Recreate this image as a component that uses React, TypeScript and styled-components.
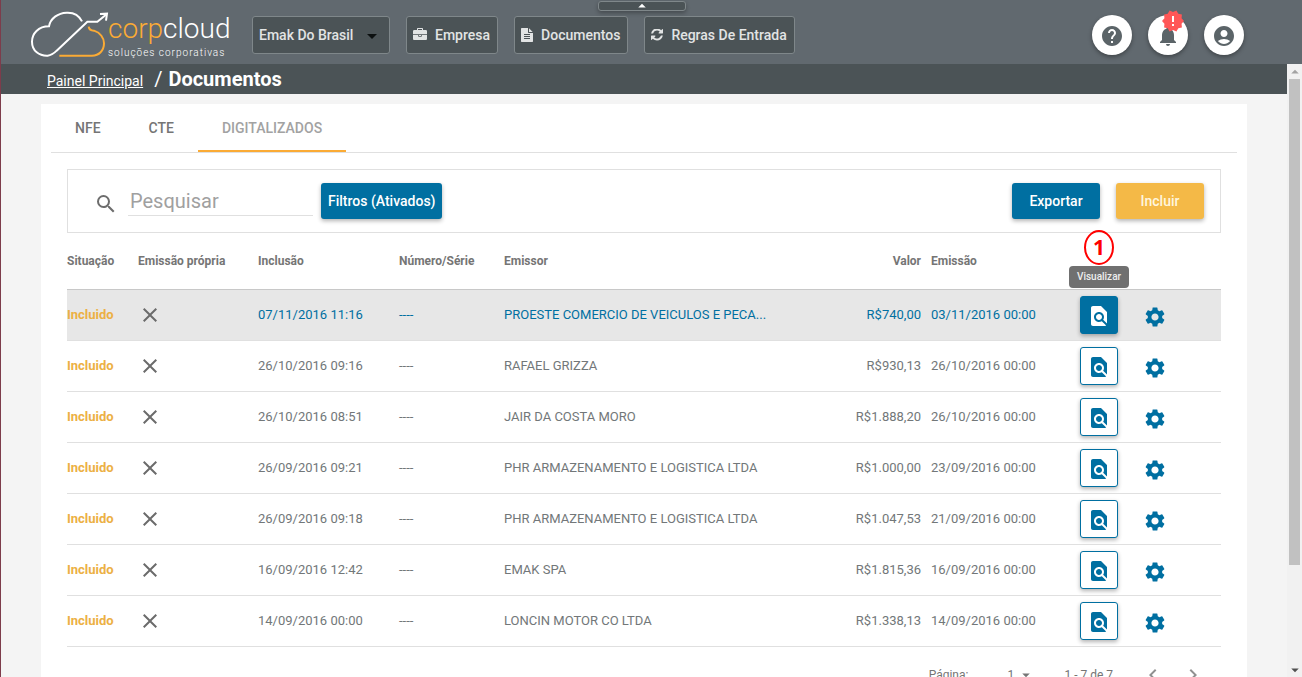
import React from "react";
import styled, { createGlobalStyle, css } from "styled-components";
import {
  MdAccountCircle,
  MdArrowDropDown,
  MdArrowDropUp,
  MdChevronLeft,
  MdChevronRight,
  MdClose,
  MdFindInPage,
  MdHelp,
  MdNewReleases,
  MdNotifications,
  MdSearch,
  MdSettings,
} from "react-icons/md";

const color = {
  header: "#61696f",
  bar: "#4b5356",
  barBorder: "#7f878a",
  page: "#f4f4f4",
  blue: "#006fa1",
  amber: "#f4b947",
  orange: "#fbab35",
  text: "#727779",
  line: "#e0e0e0",
};

const GlobalStyle = createGlobalStyle`
  *, *::before, *::after { box-sizing: border-box; }
  body {
    margin: 0;
    font-family: Roboto, "Liberation Sans", sans-serif;
    background: ${color.page};
  }
  button, input, select { font-family: inherit; }
  svg { display: block; flex: none; }
`;

const Shell = styled.div`
  display: flex;
  flex-direction: column;
  height: 100vh;
  border-left: 1px solid #7d3c4b;
  overflow: hidden;
`;

const Header = styled.header`
  position: relative;
  flex: none;
  display: flex;
  align-items: center;
  height: 64px;
  padding: 6px 58px 0 29px;
  background: ${color.header};
`;

const PullTab = styled.button`
  position: absolute;
  top: 1px;
  left: calc(50% - 54px);
  display: flex;
  align-items: center;
  justify-content: center;
  width: 88px;
  height: 10px;
  padding: 0;
  overflow: hidden;
  border: 1px solid ${color.barBorder};
  border-radius: 3px;
  background: ${color.bar};
  color: #fff;
  box-shadow: 0 2px 4px rgba(0, 0, 0, 0.3);
`;

const Brand = styled.a`
  display: flex;
  flex: none;
  width: 206px;
  margin-right: 16px;
  color: #fff;
  text-decoration: none;
`;

const BrandText = styled.span`
  display: flex;
  flex-direction: column;
  margin-left: -2px;
  padding-top: 3px;
`;

const BrandName = styled.span`
  font-size: 28px;
  line-height: 32px;
  font-weight: 300;
  white-space: nowrap;

  em {
    color: ${color.orange};
    font-style: normal;
  }
`;

const BrandTag = styled.span`
  padding-top: 2px;
  font-size: 10px;
  line-height: 12px;
  font-weight: 300;
  letter-spacing: 1px;
  white-space: nowrap;
`;

const Nav = styled.nav`
  display: flex;
  gap: 16px;
`;

const navControl = css`
  height: 38px;
  border: 1px solid ${color.barBorder};
  border-radius: 3px;
  background: ${color.bar};
  color: #e2e4e4;
  font-size: 14px;
  font-weight: 500;
  white-space: nowrap;
`;

const NavButton = styled.button`
  ${navControl}
  display: flex;
  align-items: center;
  gap: 8px;
  padding: 0 7px 0 6px;
`;

const CompanyField = styled.label`
  display: flex;
  position: relative;

  svg {
    position: absolute;
    top: 8px;
    right: 6px;
    color: #0c1010;
    pointer-events: none;
  }
`;

const CompanySelect = styled.select`
  ${navControl}
  appearance: none;
  width: 138px;
  padding: 0 30px 0 6px;
`;

const UserActions = styled.div`
  display: flex;
  gap: 16px;
  margin-left: auto;
`;

const RoundButton = styled.button`
  position: relative;
  display: flex;
  align-items: center;
  justify-content: center;
  width: 40px;
  height: 40px;
  padding: 2px 0 0;
  border: 0;
  border-radius: 50%;
  background: #fff;
  color: #5b6468;
  box-shadow: 0 2px 4px rgba(0, 0, 0, 0.35);
`;

const Alert = styled.span`
  position: absolute;
  top: -6px;
  right: 3px;
  color: #ff5757;
  background: linear-gradient(#fff, #fff) center / 4px 12px no-repeat;
`;

const Body = styled.div`
  flex: 1;
  display: flex;
  min-height: 0;
`;

const Content = styled.main`
  flex: 1;
  min-width: 0;
  overflow-y: auto;
  scrollbar-width: none;
`;

const ScrollRail = styled.div`
  flex: none;
  display: flex;
  flex-direction: column;
  width: 15px;
  background: #f1f1f1;
`;

const ScrollArrow = styled.span<{ $end?: boolean }>`
  display: flex;
  align-items: center;
  justify-content: center;
  height: 15px;
  color: ${(p) => (p.$end ? "#505050" : "#a3a3a3")};
`;

const ScrollThumb = styled.span`
  flex: 5;
  margin: 0 2px;
  background: #c1c1c1;
`;

const ScrollRest = styled.span`
  flex: 1;
`;

const Crumbs = styled.div`
  display: flex;
  align-items: center;
  height: 30px;
  padding: 0 46px;
  background: ${color.bar};
  color: #fff;
`;

const CrumbLink = styled.a`
  margin-right: 11px;
  padding-top: 4px;
  color: #fff;
  font-size: 14px;
  line-height: 18px;
`;

const CrumbTitle = styled.h1`
  margin: 0;
  font-size: 20px;
  line-height: 30px;
  font-weight: 700;

  span {
    margin-right: 6px;
    font-weight: 400;
  }
`;

const Panel = styled.section`
  margin: 10px 40px 16px;
  padding: 0 10px 16px;
  background: #fff;
`;

const Tabs = styled.div`
  display: flex;
  border-bottom: 1px solid ${color.line};
`;

const Tab = styled.button<{ $active?: boolean }>`
  height: 48px;
  padding: 2px 24px 0;
  border: 0;
  border-bottom: 2px solid ${(p) => (p.$active ? color.orange : "transparent")};
  background: none;
  color: ${(p) => (p.$active ? "#a2a2a2" : "#757575")};
  font-size: 14px;
  font-weight: 500;
`;

const Inner = styled.div`
  padding: 16px 16px 0;
`;

const Toolbar = styled.div`
  display: flex;
  align-items: center;
  height: 64px;
  padding: 0 16px 0 26px;
  border: 1px solid ${color.line};
`;

const SearchField = styled.label`
  display: flex;
  align-items: center;
  gap: 10px;
  margin-right: 8px;
  color: #6d6d6d;

  svg {
    margin-top: 6px;
  }
`;

const SearchInput = styled.input`
  width: 185px;
  height: 30px;
  padding: 0 2px;
  border: 0;
  border-bottom: 1px solid ${color.line};
  background: none;
  color: #555;
  font-size: 20px;

  &::placeholder {
    color: #a0a0a0;
  }
`;

const Raised = styled.button<{ $tone?: "amber" }>`
  min-width: 88px;
  height: 36px;
  padding: 0 7px;
  border: 0;
  border-radius: 3px;
  background: ${(p) => (p.$tone === "amber" ? color.amber : color.blue)};
  color: ${(p) => (p.$tone === "amber" ? "#fff6df" : "#fff")};
  font-size: 14px;
  font-weight: 500;
  white-space: nowrap;
  box-shadow: 0 2px 4px rgba(0, 0, 0, 0.3);
`;

const ToolbarEnd = styled.div`
  display: flex;
  gap: 16px;
  margin-left: auto;
`;

const Table = styled.table`
  width: 100%;
  table-layout: fixed;
  border-collapse: separate;
  border-spacing: 0;
`;

const Th = styled.th<{ $right?: boolean }>`
  height: 57px;
  padding: ${(p) => (p.$right ? "0 10px 0 0" : "0")};
  border-bottom: 1px solid #c8c8c8;
  color: #757575;
  font-size: 12px;
  font-weight: 700;
  text-align: ${(p) => (p.$right ? "right" : "left")};
  white-space: nowrap;
`;

const Td = styled.td`
  height: 51px;
  padding: 0;
  border-bottom: 1px solid ${color.line};
`;

const TextTd = styled(Td)<{ $right?: boolean }>`
  padding: ${(p) => (p.$right ? "0 10px 2px 0" : "0 0 2px")};
  font-size: 13px;
  text-align: ${(p) => (p.$right ? "right" : "left")};
  white-space: nowrap;
`;

const Row = styled.tr<{ $hover: boolean }>`
  color: ${(p) => (p.$hover ? color.blue : color.text)};
  background: ${(p) => (p.$hover ? "#e7e7e7" : "transparent")};
`;

const Status = styled.strong`
  color: #ecb044;
  font-weight: 700;
`;

const NotOwn = styled.span`
  display: block;
  color: #6b6b6b;
`;

const ViewCell = styled.div`
  position: relative;
  width: 38px;
`;

const ViewButton = styled.button<{ $hover: boolean }>`
  display: flex;
  align-items: center;
  justify-content: center;
  width: 38px;
  height: 38px;
  padding: 2px 0 0;
  border: 1px solid ${color.blue};
  border-radius: 3px;
  background: ${(p) => (p.$hover ? color.blue : "#fff")};
  color: ${(p) => (p.$hover ? "#fff" : color.blue)};
  box-shadow: 0 2px 4px rgba(0, 0, 0, 0.3);
`;

const Tooltip = styled.span`
  position: absolute;
  bottom: 46px;
  left: 50%;
  width: 60px;
  transform: translateX(-50%);
  border-radius: 4px;
  background: #707070;
  color: #eee;
  font-size: 10px;
  line-height: 22px;
  font-weight: 500;
  text-align: center;
`;

const Marker = styled.span`
  position: absolute;
  bottom: 69px;
  left: 50%;
  width: 30px;
  height: 35px;
  transform: translateX(-50%);
  border: 2px solid #ff0000;
  border-radius: 50%;
  color: #ff0000;
  font-family: "Open Sans", sans-serif;
  font-size: 21px;
  line-height: 31px;
  font-weight: 700;
  text-align: center;
`;

const GearButton = styled.button`
  display: flex;
  padding: 3px 0 0;
  margin-left: -2px;
  border: 0;
  background: none;
  color: ${color.blue};
`;

const Pager = styled.div`
  display: flex;
  align-items: center;
  justify-content: flex-end;
  height: 56px;
  padding-right: 8px;
  color: #757575;
  font-size: 12px;
`;

const PageField = styled.label`
  display: flex;
  align-items: center;
  position: relative;
  gap: 39px;
  margin-right: 29px;

  svg {
    position: absolute;
    right: 0;
  }
`;

const PageSelect = styled.select`
  appearance: none;
  width: 28px;
  padding: 0;
  border: 0;
  background: none;
  color: inherit;
  font-size: 12px;
`;

const PageRange = styled.span`
  margin-right: 20px;
`;

const PageButton = styled.button`
  display: flex;
  align-items: center;
  justify-content: center;
  width: 40px;
  height: 40px;
  padding: 0;
  border: 0;
  background: none;
  color: #909090;
`;

const Briefcase = () => (
  <svg width="14" height="14" viewBox="0 0 1792 1792" fill="currentColor" aria-hidden>
    <path d="M640 256h512v-128h-512v128zm1152 640v480q0 66-47 113t-113 47h-1472q-66 0-113-47t-47-113v-480h672v160q0 26 19 45t45 19h320q26 0 45-19t19-45v-160h672zm-768 0v128h-256v-128h256zm768-480v384h-1792v-384q0-66 47-113t113-47h352v-160q0-40 28-68t68-28h576q40 0 68 28t28 68v160h352q66 0 113 47t47 113z" />
  </svg>
);

const FileText = () => (
  <svg width="12" height="14" viewBox="128 0 1536 1792" fill="currentColor" aria-hidden>
    <path d="M1596 476q14 14 28 36h-472v-472q22 14 36 28zm-476 164h544v1056q0 40-28 68t-68 28h-1344q-40 0-68-28t-28-68v-1600q0-40 28-68t68-28h800v544q0 40 28 68t68 28zm160 736v-64q0-14-9-23t-23-9h-704q-14 0-23 9t-9 23v64q0 14 9 23t23 9h704q14 0 23-9t9-23zm0-256v-64q0-14-9-23t-23-9h-704q-14 0-23 9t-9 23v64q0 14 9 23t23 9h704q14 0 23-9t9-23zm0-256v-64q0-14-9-23t-23-9h-704q-14 0-23 9t-9 23v64q0 14 9 23t23 9h704q14 0 23-9t9-23z" />
  </svg>
);

const Refresh = () => (
  <svg width="12" height="12" viewBox="0 64 1536 1536" fill="currentColor" aria-hidden>
    <path d="M1511 928q0 5-1 7-64 268-268 434.500t-478 166.500q-146 0-282.500-55t-243.500-157l-129 129q-19 19-45 19t-45-19-19-45v-448q0-26 19-45t45-19h448q26 0 45 19t19 45-19 45l-137 137q71 66 161 102t187 36q134 0 250-65t186-179q11-17 53-117 8-23 30-23h192q13 0 22.500 9.500t9.500 22.500zm25-800v448q0 26-19 45t-45 19h-448q-26 0-45-19t-19-45 19-45l138-138q-148-137-349-137-134 0-250 65t-186 179q-11 17-53 117-8 23-30 23h-199q-13 0-22.500-9.500t-9.500-22.500v-7q65-268 270-434.500t480-166.500q146 0 284 55.500t245 156.500l130-129q19-19 45-19t45 19 19 45z" />
  </svg>
);

const CloudMark = () => (
  <svg width="80" height="50" viewBox="90 28 240 150" fill="none" strokeWidth="6" aria-hidden>
    <path
      stroke="#fff"
      d="M246 62C236 42 218 35 200 36C174 37 151 53 147 77C115 77 96 99 96 123C96 151 118 166 143 165C155 164 163 157 170 150L262 63H292L318 42"
    />
    <path stroke="#fff" d="M300 40L321 39L318 60" />
    <path
      stroke={color.orange}
      d="M266 78C267 86 272 90 282 90C301 96 312 112 312 128C312 150 297 165 276 165H178"
    />
  </svg>
);

const rows = [
  ["07/11/2016 11:16", "PROESTE COMERCIO DE VEICULOS E PECA...", "R$740,00", "03/11/2016 00:00"],
  ["26/10/2016 09:16", "RAFAEL GRIZZA", "R$930,13", "26/10/2016 00:00"],
  ["26/10/2016 08:51", "JAIR DA COSTA MORO", "R$1.888,20", "26/10/2016 00:00"],
  ["26/09/2016 09:21", "PHR ARMAZENAMENTO E LOGISTICA LTDA", "R$1.000,00", "23/09/2016 00:00"],
  ["26/09/2016 09:18", "PHR ARMAZENAMENTO E LOGISTICA LTDA", "R$1.047,53", "21/09/2016 00:00"],
  ["16/09/2016 12:42", "EMAK SPA", "R$1.815,36", "16/09/2016 00:00"],
  ["14/09/2016 00:00", "LONCIN MOTOR CO LTDA", "R$1.338,13", "14/09/2016 00:00"],
];

const columnWidths = [71, 120, 141, 105, undefined, 100, 149, 65, 76];

export default function App() {
  return (
    <Shell>
      <GlobalStyle />
      <Header>
        <Brand href="#">
          <CloudMark />
          <BrandText>
            <BrandName>
              <em>corp</em>cloud
            </BrandName>
            <BrandTag>soluções corporativas</BrandTag>
          </BrandText>
        </Brand>
        <Nav>
          <CompanyField>
            <CompanySelect aria-label="Empresa ativa">
              <option>Emak Do Brasil</option>
            </CompanySelect>
            <MdArrowDropDown size={24} />
          </CompanyField>
          <NavButton>
            <Briefcase />
            Empresa
          </NavButton>
          <NavButton>
            <FileText />
            Documentos
          </NavButton>
          <NavButton>
            <Refresh />
            Regras De Entrada
          </NavButton>
        </Nav>
        <PullTab aria-label="Recolher menu">
          <MdArrowDropUp size={18} />
        </PullTab>
        <UserActions>
          <RoundButton aria-label="Ajuda">
            <MdHelp size={24} />
          </RoundButton>
          <RoundButton aria-label="Notificações">
            <MdNotifications size={24} />
            <Alert>
              <MdNewReleases size={24} />
            </Alert>
          </RoundButton>
          <RoundButton aria-label="Conta">
            <MdAccountCircle size={24} />
          </RoundButton>
        </UserActions>
      </Header>
      <Body>
        <Content>
          <Crumbs>
            <CrumbLink href="#">Painel Principal</CrumbLink>
            <CrumbTitle>
              <span>/</span>Documentos
            </CrumbTitle>
          </Crumbs>
          <Panel>
            <Tabs role="tablist">
              <Tab role="tab">NFE</Tab>
              <Tab role="tab">CTE</Tab>
              <Tab role="tab" aria-selected $active>
                DIGITALIZADOS
              </Tab>
            </Tabs>
            <Inner>
              <Toolbar>
                <SearchField>
                  <MdSearch size={24} />
                  <SearchInput type="text" placeholder="Pesquisar" aria-label="Pesquisar" />
                </SearchField>
                <Raised>Filtros (Ativados)</Raised>
                <ToolbarEnd>
                  <Raised>Exportar</Raised>
                  <Raised $tone="amber">Incluir</Raised>
                </ToolbarEnd>
              </Toolbar>
              <Table>
                <colgroup>
                  {columnWidths.map((width, i) => (
                    <col key={i} width={width} />
                  ))}
                </colgroup>
                <thead>
                  <tr>
                    <Th>Situação</Th>
                    <Th>Emissão própria</Th>
                    <Th>Inclusão</Th>
                    <Th>Número/Série</Th>
                    <Th>Emissor</Th>
                    <Th $right>Valor</Th>
                    <Th>Emissão</Th>
                    <Th />
                    <Th />
                  </tr>
                </thead>
                <tbody>
                  {rows.map(([added, issuer, amount, issued], i) => (
                    <Row key={added} $hover={i === 0}>
                      <TextTd>
                        <Status>Incluido</Status>
                      </TextTd>
                      <Td>
                        <NotOwn>
                          <MdClose size={24} />
                        </NotOwn>
                      </Td>
                      <TextTd>{added}</TextTd>
                      <TextTd>----</TextTd>
                      <TextTd>{issuer}</TextTd>
                      <TextTd $right>{amount}</TextTd>
                      <TextTd>{issued}</TextTd>
                      <Td>
                        <ViewCell>
                          <ViewButton aria-label="Visualizar" $hover={i === 0}>
                            <MdFindInPage size={24} />
                          </ViewButton>
                          {i === 0 && (
                            <>
                              <Tooltip role="tooltip">Visualizar</Tooltip>
                              <Marker>1</Marker>
                            </>
                          )}
                        </ViewCell>
                      </Td>
                      <Td>
                        <GearButton aria-label="Configurar">
                          <MdSettings size={24} />
                        </GearButton>
                      </Td>
                    </Row>
                  ))}
                </tbody>
              </Table>
              <Pager>
                <PageField>
                  Página:
                  <PageSelect>
                    <option>1</option>
                  </PageSelect>
                  <MdArrowDropDown size={18} />
                </PageField>
                <PageRange>1 - 7 de 7</PageRange>
                <PageButton aria-label="Página anterior">
                  <MdChevronLeft size={24} />
                </PageButton>
                <PageButton aria-label="Próxima página">
                  <MdChevronRight size={24} />
                </PageButton>
              </Pager>
            </Inner>
          </Panel>
        </Content>
        <ScrollRail aria-hidden>
          <ScrollArrow>
            <MdArrowDropUp size={18} />
          </ScrollArrow>
          <ScrollThumb />
          <ScrollRest />
          <ScrollArrow $end>
            <MdArrowDropDown size={18} />
          </ScrollArrow>
        </ScrollRail>
      </Body>
    </Shell>
  );
}
